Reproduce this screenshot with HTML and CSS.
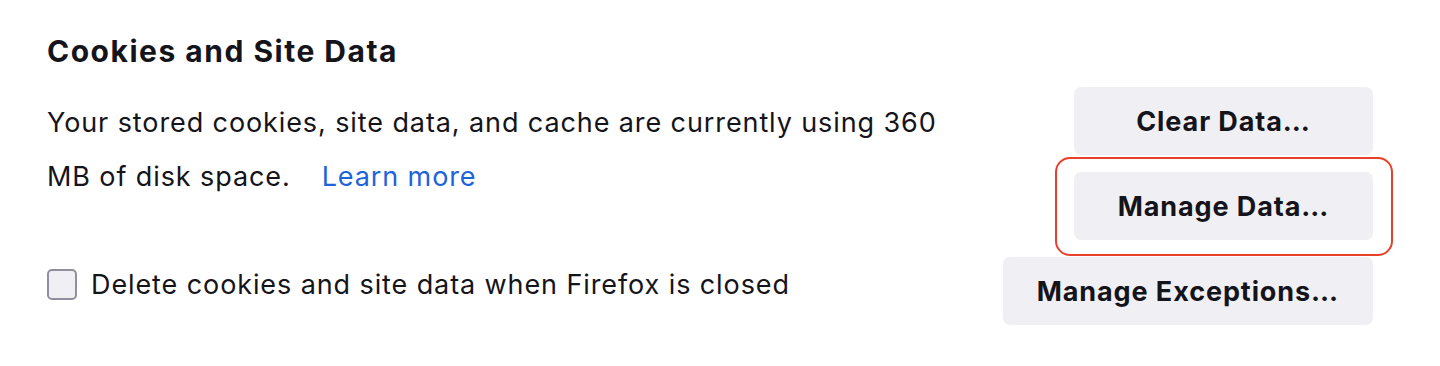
FILE: index.html
```html
<!DOCTYPE html>
<html lang="en">
<head>
<meta charset="utf-8">
<title>Cookies and Site Data</title>
<link rel="stylesheet" href="styles.css">
</head>
<body>
<section class="page">
  <h1 class="title">Cookies and Site Data</h1>
  <div class="grid">
    <p class="desc"><span class="desc-text">Your stored cookies, site data, and cache are currently using 360 MB of disk space.</span><a class="link" href="#">Learn more</a></p>
    <div class="btn-col">
      <button class="btn btn-fixed">Clear Data…</button>
      <div class="highlight">
        <button class="btn btn-fixed">Manage Data…</button>
      </div>
    </div>
    <label class="check-row">
      <span class="checkbox"></span>
      <span class="check-label">Delete cookies and site data when Firefox is closed</span>
    </label>
    <div class="btn-col">
      <button class="btn btn-wide">Manage Exceptions…</button>
    </div>
  </div>
</section>
</body>
</html>
```

FILE: styles.css
```css
html, body {
  margin: 0;
  padding: 0;
  background: #ffffff;
}

body {
  font-family: Inter, "Noto Sans", "Liberation Sans", sans-serif;
  color: #15141a;
}

.page {
  padding: 33px 67px 0 47px;
}

.title {
  margin: 0 0 18px 0;
  font-size: 30px;
  line-height: 36px;
  font-weight: 700;
  letter-spacing: 1.5px;
}

.grid {
  display: grid;
  grid-template-columns: 1fr auto;
  row-gap: 17px;
}

.desc {
  margin: 9px 0 0 0;
  width: 920px;
  font-size: 27px;
  line-height: 54px;
  letter-spacing: 0.9px;
}

.link {
  color: #1d63dc;
  text-decoration: none;
  margin-left: 31px;
}

.btn-col {
  display: flex;
  flex-direction: column;
  align-items: flex-end;
  gap: 17px;
}

.btn {
  font-family: Inter, "Noto Sans", "Liberation Sans", sans-serif;
  font-size: 27px;
  font-weight: 700;
  letter-spacing: 0.9px;
  color: #15141a;
  background: #f0f0f4;
  border: none;
  border-radius: 7px;
  height: 68px;
  padding: 0;
  margin: 0;
}

.btn-fixed {
  width: 299px;
}

.btn-wide {
  padding: 0 34px;
}

.highlight {
  position: relative;
  display: flex;
}

.highlight::after {
  content: "";
  position: absolute;
  top: -15px;
  bottom: -16px;
  left: -19px;
  right: -20px;
  border: 2px solid #e8402a;
  border-radius: 15px;
  pointer-events: none;
}

.check-row {
  display: flex;
  align-items: center;
  gap: 14px;
  margin-top: 12px;
  align-self: start;
}

.checkbox {
  box-sizing: border-box;
  width: 30px;
  height: 31px;
  border: 2px solid #8f8f9d;
  border-radius: 5px;
  background: #f0f0f4;
  flex: none;
}

.check-label {
  font-size: 27px;
  line-height: 30px;
  letter-spacing: 0.9px;
}
```
